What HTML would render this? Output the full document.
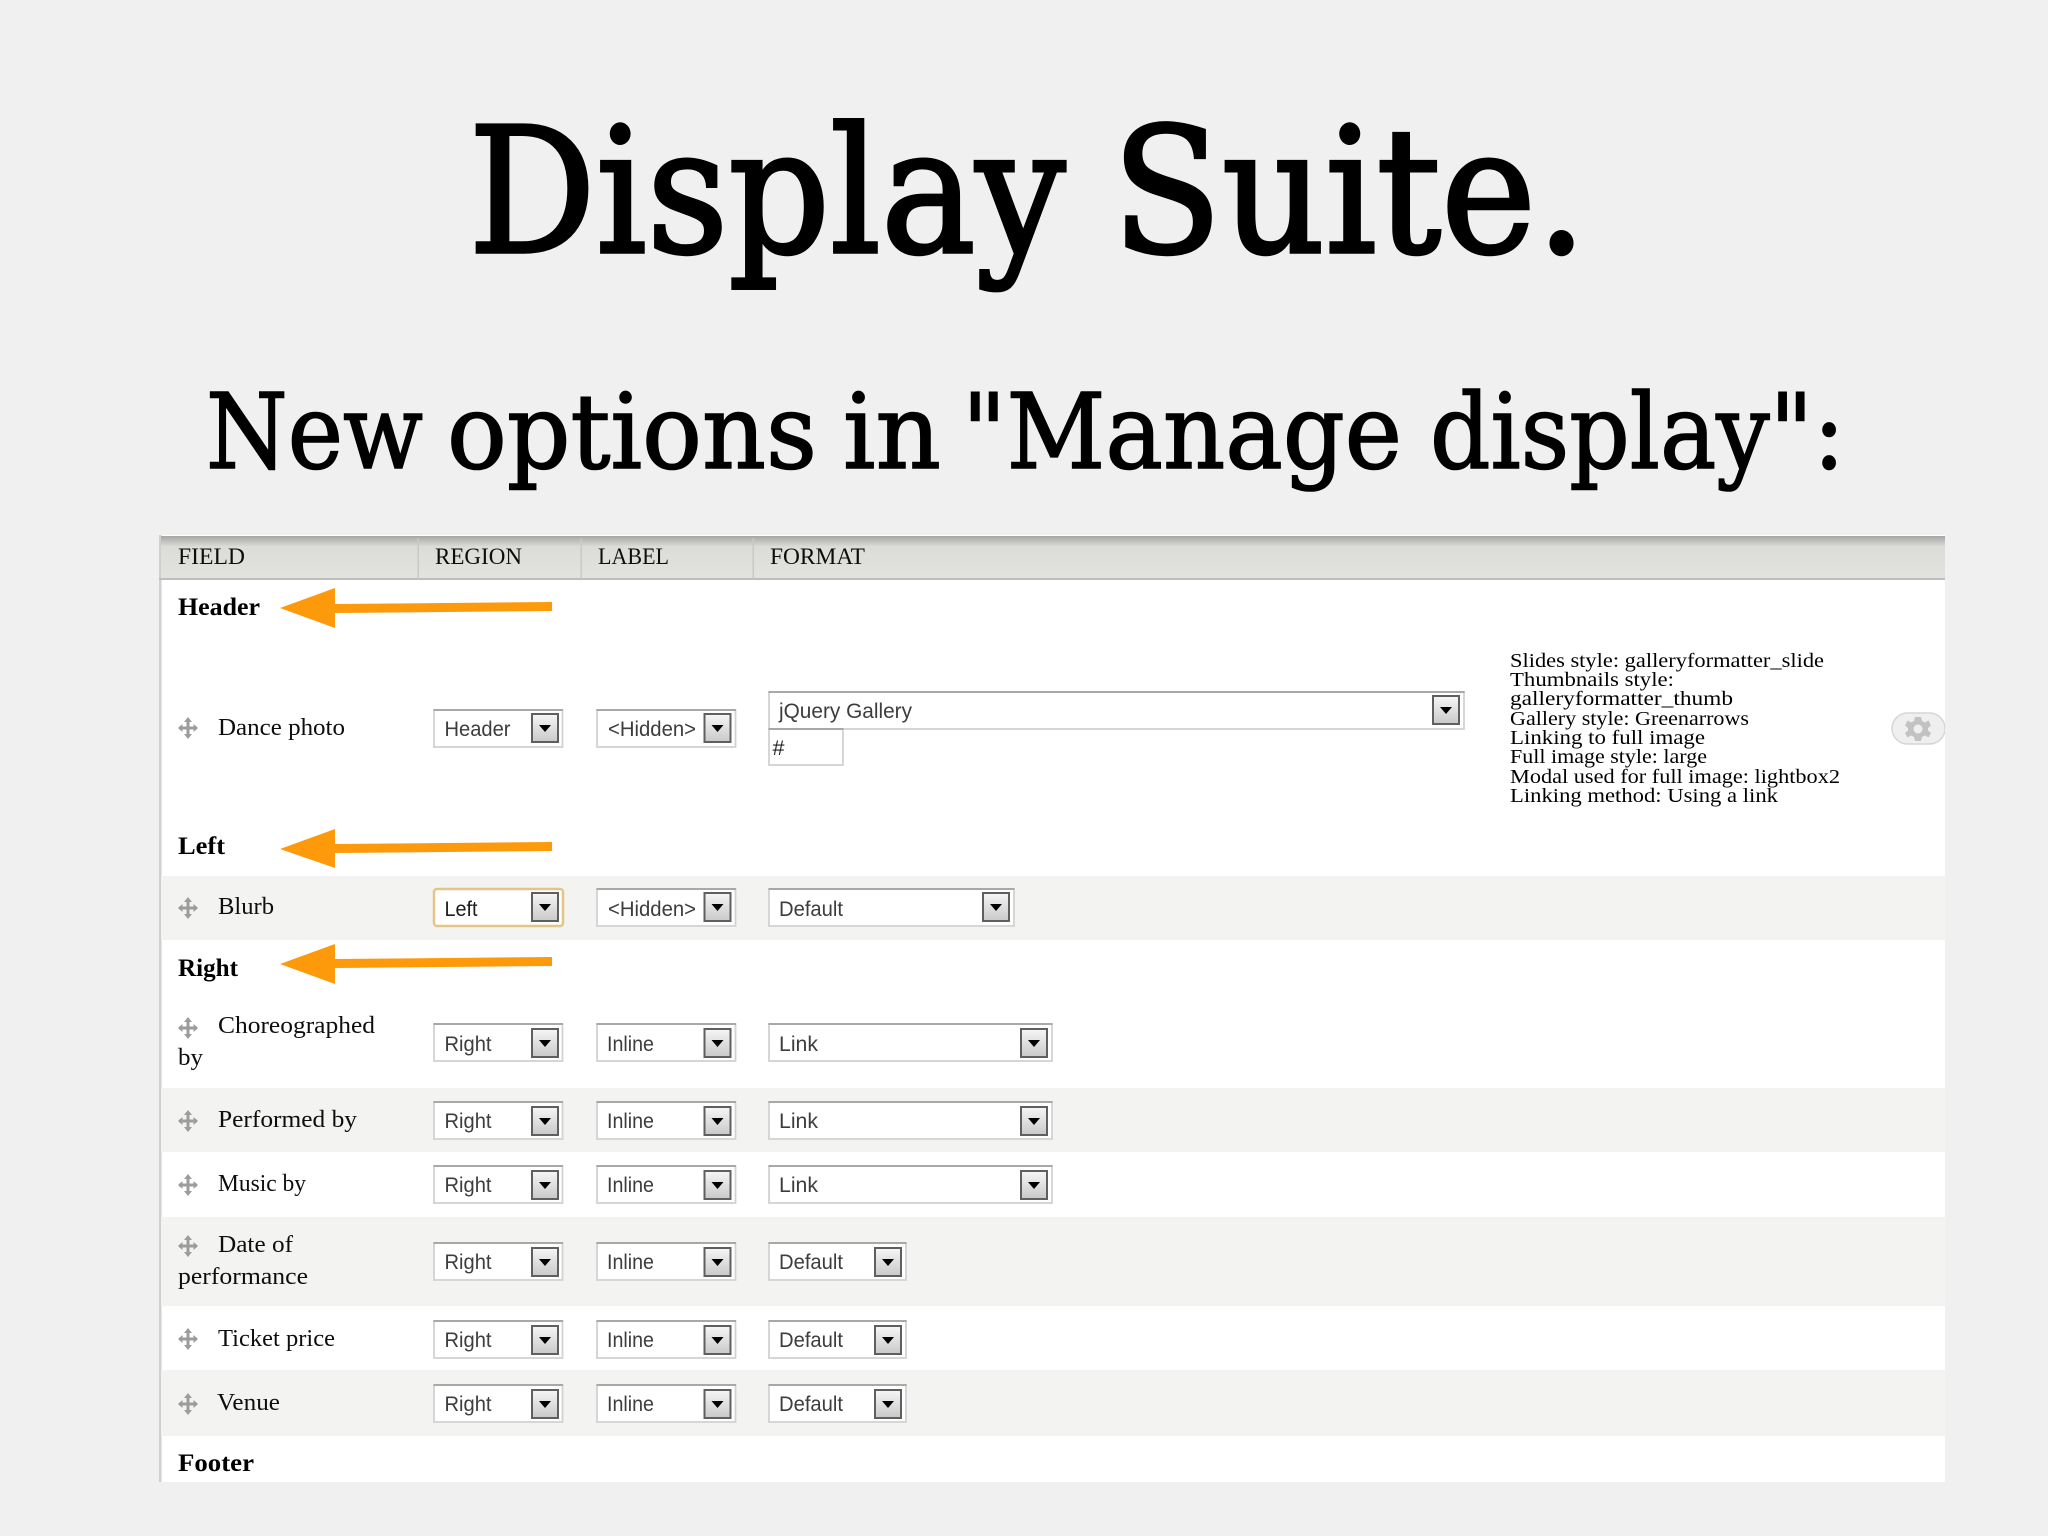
<!DOCTYPE html>
<html lang="en">
<head>
<meta charset="utf-8">
<title>Display Suite.</title>
<style>
html,body{margin:0;padding:0;background:#f0f0f0;width:2048px;height:1536px;overflow:hidden}
svg{display:block}
.t{font-family:"DejaVu Serif","Liberation Serif",serif;fill:#000;stroke:#000}
.h{font:23.5px "Liberation Serif",serif;fill:#111}
.b{font:bold 25px "Liberation Serif",serif;fill:#000}
.r{font:24.5px "Liberation Serif",serif;fill:#111}
.d{font:20.5px "Liberation Serif",serif;fill:#000}
.s{font:21.5px "Liberation Sans",sans-serif;fill:#3c3c3c}
.sel{fill:#fff;stroke:#d2d2d2;stroke-width:1.800}
.top{stroke:#a8a8a8;stroke-width:2}
</style>
</head>
<body>
<svg width="2048" height="1536" viewBox="0 0 2048 1536" xmlns="http://www.w3.org/2000/svg">
<defs>
<linearGradient id="hg" x1="0" y1="0" x2="0" y2="1"><stop offset="0" stop-color="#a6a6a4"/><stop offset=".25" stop-color="#dcdcd9"/><stop offset="1" stop-color="#e2e2de"/></linearGradient>
<linearGradient id="bg" x1="0" y1="0" x2="0" y2="1"><stop offset="0" stop-color="#f6f6f6"/><stop offset="1" stop-color="#c9c9c9"/></linearGradient>
<g id="btn"><rect x="-13" y="-14" width="26" height="28" fill="url(#bg)" stroke="#5e5e5e" stroke-width="2"/><path d="M-6 -3H6L0 4Z" fill="#000"/></g>
<g id="mv" fill="#9c9c9c"><rect x="-1.500" y="-9" width="3" height="18"/><rect x="-9" y="-1.500" width="18" height="3"/><path d="M0 -11L-4 -6H4ZM0 11L-4 6H4ZM-10 0L-5.500 -4V4ZM10 0L5.500 -4V4Z"/></g>
<filter id="soft" x="0" y="0" width="100%" height="100%"><feGaussianBlur stdDeviation="0.35"/></filter>
</defs>

<text class="t" x="468.500" y="252" font-size="174" stroke-width="3.500" textLength="597" lengthAdjust="spacingAndGlyphs">Display</text>
<text class="t" x="1112" y="252" font-size="174" stroke-width="3.500" textLength="475" lengthAdjust="spacingAndGlyphs">Suite.</text>

<text class="t" x="206" y="468" font-size="104" stroke-width="1.600" textLength="217" lengthAdjust="spacingAndGlyphs">New</text>
<text class="t" x="447" y="468" font-size="104" stroke-width="1.600" textLength="370" lengthAdjust="spacingAndGlyphs">options</text>
<text class="t" x="843" y="468" font-size="104" stroke-width="1.600" textLength="98" lengthAdjust="spacingAndGlyphs">in</text>
<text class="t" x="962" y="468" font-size="104" stroke-width="1.600" textLength="440" lengthAdjust="spacingAndGlyphs">"Manage</text>
<text class="t" x="1430" y="468" font-size="104" stroke-width="1.600" textLength="415" lengthAdjust="spacingAndGlyphs">display":</text>

<g filter="url(#soft)">
<rect x="159" y="535" width="1786" height="947" fill="#fff"/>
<rect x="159" y="535" width="2.500" height="947" fill="#cfcfcf"/>
<rect x="161" y="536" width="1784" height="43" fill="url(#hg)"/>
<rect x="159" y="578" width="1786" height="2" fill="#bdbdbb"/>
<rect x="417.500" y="538" width="1.500" height="41" fill="#c8c8c6"/>
<rect x="580.500" y="538" width="1.500" height="41" fill="#c8c8c6"/>
<rect x="752.500" y="538" width="1.500" height="41" fill="#c8c8c6"/>

<rect x="161" y="876" width="1784" height="64" fill="#f3f3f1"/>
<rect x="161" y="1088" width="1784" height="64" fill="#f3f3f1"/>
<rect x="161" y="1217" width="1784" height="89" fill="#f3f3f1"/>
<rect x="161" y="1370" width="1784" height="66" fill="#f3f3f1"/>

<text class="h" x="178" y="564" textLength="67" lengthAdjust="spacingAndGlyphs">FIELD</text>
<text class="h" x="435" y="564" textLength="87" lengthAdjust="spacingAndGlyphs">REGION</text>
<text class="h" x="598" y="564" textLength="71" lengthAdjust="spacingAndGlyphs">LABEL</text>
<text class="h" x="770" y="564" textLength="95" lengthAdjust="spacingAndGlyphs">FORMAT</text>

<text class="b" x="178" y="615" textLength="82" lengthAdjust="spacingAndGlyphs">Header</text>
<text class="b" x="178" y="854" textLength="47" lengthAdjust="spacingAndGlyphs">Left</text>
<text class="b" x="178" y="976" textLength="60" lengthAdjust="spacingAndGlyphs">Right</text>
<text class="b" x="178" y="1471" textLength="76" lengthAdjust="spacingAndGlyphs">Footer</text>

<text class="r" x="218" y="735" textLength="127" lengthAdjust="spacingAndGlyphs">Dance photo</text>
<text class="r" x="218" y="914" textLength="56" lengthAdjust="spacingAndGlyphs">Blurb</text>
<text class="r" x="218" y="1033" textLength="157" lengthAdjust="spacingAndGlyphs">Choreographed</text>
<text class="r" x="178" y="1065" textLength="25" lengthAdjust="spacingAndGlyphs">by</text>
<text class="r" x="218" y="1127" textLength="139" lengthAdjust="spacingAndGlyphs">Performed by</text>
<text class="r" x="218" y="1191" textLength="88" lengthAdjust="spacingAndGlyphs">Music by</text>
<text class="r" x="218" y="1252" textLength="75" lengthAdjust="spacingAndGlyphs">Date of</text>
<text class="r" x="178" y="1284" textLength="130" lengthAdjust="spacingAndGlyphs">performance</text>
<text class="r" x="218" y="1346" textLength="117" lengthAdjust="spacingAndGlyphs">Ticket price</text>
<text class="r" x="217" y="1410" textLength="63" lengthAdjust="spacingAndGlyphs">Venue</text>

<use href="#mv" x="188" y="728"/><use href="#mv" x="188" y="908"/><use href="#mv" x="188" y="1028"/><use href="#mv" x="188" y="1121"/><use href="#mv" x="188" y="1185"/><use href="#mv" x="188" y="1246"/><use href="#mv" x="188" y="1339"/><use href="#mv" x="188" y="1404"/>

<!-- Dance photo -->
<rect class="sel" x="434" y="710" width="128.500" height="37"/><path class="top" d="M433.500 710H563"/><use href="#btn" x="545" y="728"/><text class="s" x="444.500" y="736" textLength="66" lengthAdjust="spacingAndGlyphs">Header</text>
<rect class="sel" x="597" y="710" width="138.500" height="37"/><path class="top" d="M596.500 710H736"/><use href="#btn" x="717.500" y="728"/><text class="s" x="608" y="736" textLength="88" lengthAdjust="spacingAndGlyphs">&lt;Hidden&gt;</text>
<rect class="sel" x="769" y="692" width="695" height="37"/><path class="top" d="M768.500 692H1464.500"/><use href="#btn" x="1446" y="710"/><text class="s" x="779" y="718" textLength="133" lengthAdjust="spacingAndGlyphs">jQuery Gallery</text>
<rect class="sel" x="769" y="729" width="74" height="36"/><path class="top" d="M768.500 729H843.500"/><text class="s" x="772.500" y="755" textLength="12" lengthAdjust="spacingAndGlyphs" style="fill:#222">#</text>

<!-- Blurb -->
<rect x="434" y="889" width="129" height="37" rx="3" fill="#fff" stroke="#e4c583" stroke-width="2.500"/><use href="#btn" x="545" y="907"/><text class="s" x="444.500" y="916" textLength="33" lengthAdjust="spacingAndGlyphs" style="fill:#1c1c1c">Left</text>
<rect class="sel" x="597" y="889" width="138.500" height="37"/><path class="top" d="M596.500 889H736"/><use href="#btn" x="717.500" y="907"/><text class="s" x="608" y="916" textLength="88" lengthAdjust="spacingAndGlyphs">&lt;Hidden&gt;</text>
<rect class="sel" x="769" y="889" width="245" height="37"/><path class="top" d="M768.500 889H1014.500"/><use href="#btn" x="996" y="907"/><text class="s" x="779" y="916" textLength="64" lengthAdjust="spacingAndGlyphs">Default</text>

<!-- Choreographed -->
<rect class="sel" x="434" y="1024" width="128.500" height="37"/><path class="top" d="M433.500 1024H563"/><use href="#btn" x="545" y="1043"/><text class="s" x="444.500" y="1051" textLength="47" lengthAdjust="spacingAndGlyphs">Right</text>
<rect class="sel" x="597" y="1024" width="138.500" height="37"/><path class="top" d="M596.500 1024H736"/><use href="#btn" x="717.500" y="1043"/><text class="s" x="607" y="1051" textLength="47" lengthAdjust="spacingAndGlyphs">Inline</text>
<rect class="sel" x="769" y="1024" width="283" height="37"/><path class="top" d="M768.500 1024H1052.500"/><use href="#btn" x="1034" y="1043"/><text class="s" x="779" y="1051" textLength="39" lengthAdjust="spacingAndGlyphs">Link</text>

<!-- Performed -->
<rect class="sel" x="434" y="1102" width="128.500" height="37"/><path class="top" d="M433.500 1102H563"/><use href="#btn" x="545" y="1121"/><text class="s" x="444.500" y="1128" textLength="47" lengthAdjust="spacingAndGlyphs">Right</text>
<rect class="sel" x="597" y="1102" width="138.500" height="37"/><path class="top" d="M596.500 1102H736"/><use href="#btn" x="717.500" y="1121"/><text class="s" x="607" y="1128" textLength="47" lengthAdjust="spacingAndGlyphs">Inline</text>
<rect class="sel" x="769" y="1102" width="283" height="37"/><path class="top" d="M768.500 1102H1052.500"/><use href="#btn" x="1034" y="1121"/><text class="s" x="779" y="1128" textLength="39" lengthAdjust="spacingAndGlyphs">Link</text>

<!-- Music -->
<rect class="sel" x="434" y="1166" width="128.500" height="37"/><path class="top" d="M433.500 1166H563"/><use href="#btn" x="545" y="1185"/><text class="s" x="444.500" y="1192" textLength="47" lengthAdjust="spacingAndGlyphs">Right</text>
<rect class="sel" x="597" y="1166" width="138.500" height="37"/><path class="top" d="M596.500 1166H736"/><use href="#btn" x="717.500" y="1185"/><text class="s" x="607" y="1192" textLength="47" lengthAdjust="spacingAndGlyphs">Inline</text>
<rect class="sel" x="769" y="1166" width="283" height="37"/><path class="top" d="M768.500 1166H1052.500"/><use href="#btn" x="1034" y="1185"/><text class="s" x="779" y="1192" textLength="39" lengthAdjust="spacingAndGlyphs">Link</text>

<!-- Date -->
<rect class="sel" x="434" y="1243" width="128.500" height="37"/><path class="top" d="M433.500 1243H563"/><use href="#btn" x="545" y="1262"/><text class="s" x="444.500" y="1269" textLength="47" lengthAdjust="spacingAndGlyphs">Right</text>
<rect class="sel" x="597" y="1243" width="138.500" height="37"/><path class="top" d="M596.500 1243H736"/><use href="#btn" x="717.500" y="1262"/><text class="s" x="607" y="1269" textLength="47" lengthAdjust="spacingAndGlyphs">Inline</text>
<rect class="sel" x="769" y="1243" width="137" height="37"/><path class="top" d="M768.500 1243H906.500"/><use href="#btn" x="888" y="1262"/><text class="s" x="779" y="1269" textLength="64" lengthAdjust="spacingAndGlyphs">Default</text>

<!-- Ticket -->
<rect class="sel" x="434" y="1321" width="128.500" height="37"/><path class="top" d="M433.500 1321H563"/><use href="#btn" x="545" y="1340"/><text class="s" x="444.500" y="1347" textLength="47" lengthAdjust="spacingAndGlyphs">Right</text>
<rect class="sel" x="597" y="1321" width="138.500" height="37"/><path class="top" d="M596.500 1321H736"/><use href="#btn" x="717.500" y="1340"/><text class="s" x="607" y="1347" textLength="47" lengthAdjust="spacingAndGlyphs">Inline</text>
<rect class="sel" x="769" y="1321" width="137" height="37"/><path class="top" d="M768.500 1321H906.500"/><use href="#btn" x="888" y="1340"/><text class="s" x="779" y="1347" textLength="64" lengthAdjust="spacingAndGlyphs">Default</text>

<!-- Venue -->
<rect class="sel" x="434" y="1385" width="128.500" height="37"/><path class="top" d="M433.500 1385H563"/><use href="#btn" x="545" y="1404"/><text class="s" x="444.500" y="1411" textLength="47" lengthAdjust="spacingAndGlyphs">Right</text>
<rect class="sel" x="597" y="1385" width="138.500" height="37"/><path class="top" d="M596.500 1385H736"/><use href="#btn" x="717.500" y="1404"/><text class="s" x="607" y="1411" textLength="47" lengthAdjust="spacingAndGlyphs">Inline</text>
<rect class="sel" x="769" y="1385" width="137" height="37"/><path class="top" d="M768.500 1385H906.500"/><use href="#btn" x="888" y="1404"/><text class="s" x="779" y="1411" textLength="64" lengthAdjust="spacingAndGlyphs">Default</text>

<!-- Format summary -->
<text class="d" x="1510" y="667" textLength="314" lengthAdjust="spacingAndGlyphs">Slides style: galleryformatter_slide</text>
<text class="d" x="1510" y="686" textLength="164" lengthAdjust="spacingAndGlyphs">Thumbnails style:</text>
<text class="d" x="1510" y="705" textLength="223" lengthAdjust="spacingAndGlyphs">galleryformatter_thumb</text>
<text class="d" x="1510" y="725" textLength="239" lengthAdjust="spacingAndGlyphs">Gallery style: Greenarrows</text>
<text class="d" x="1510" y="744" textLength="195" lengthAdjust="spacingAndGlyphs">Linking to full image</text>
<text class="d" x="1510" y="763" textLength="197" lengthAdjust="spacingAndGlyphs">Full image style: large</text>
<text class="d" x="1510" y="783" textLength="330" lengthAdjust="spacingAndGlyphs">Modal used for full image: lightbox2</text>
<text class="d" x="1510" y="802" textLength="268" lengthAdjust="spacingAndGlyphs">Linking method: Using a link</text>

<!-- Gear -->
<rect x="1892" y="713" width="53" height="31" rx="15.500" fill="#efefef" stroke="#d6d6d6" stroke-width="1.500"/>
<g transform="translate(1918 729)" fill="#c2c2c2">
<path fill-rule="evenodd" d="M-3 -12H3L4 -8L7 -6.500L10.500 -8.500L13 -3.500L10 -1V1.500L13 4L10.500 8.500L7 6.500L4 8L3 12H-3L-4 8L-7 6.500L-10.500 8.500L-13 4L-10 1.500V-1L-13 -3.500L-10.500 -8.500L-7 -6.500L-4 -8ZM0 -4.500A4.500 4.500 0 1 0 0.010 -4.500Z"/>
</g>
</g>

<!-- Arrows -->
<g fill="#fd9a0b">
<path d="M280 608L335 588V604L552 602V611L335 613V628Z"/>
<path d="M280 849L335 829V844L552 842V851L335 853V868Z"/>
<path d="M280 964L335 944V959L552 957V966L335 968V984Z"/>
</g>
</svg>
</body>
</html>
